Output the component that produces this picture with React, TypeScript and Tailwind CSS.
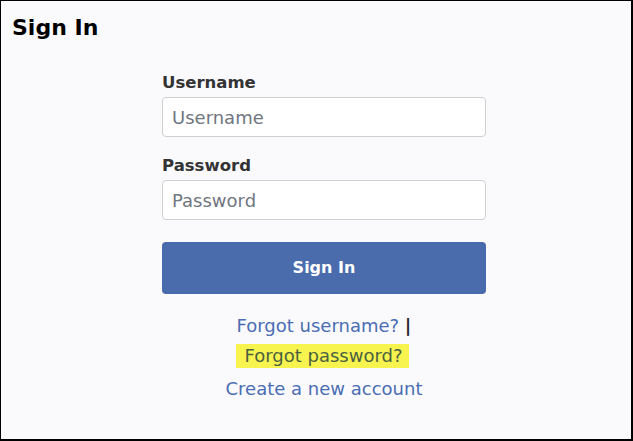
import React from 'react';

const font = { fontFamily: '"DejaVu Sans", sans-serif' };

const Field = ({ label, type }: { label: string; type: string }) => (
  <div>
    <label className="block text-[16.5px] font-bold leading-[20px] text-[#333333] mb-1">{label}</label>
    <input
      type={type}
      placeholder={label}
      className="block w-full h-[40px] rounded-[4px] border border-[#cfcfd2] bg-white pl-[9px] text-[18px] text-[#333] placeholder:text-[#707680] outline-none"
    />
  </div>
);

const App = () => {
  return (
    <div
      style={font}
      className="w-[633px] h-[441px] bg-[#fafafd] border-t border-l border-r-2 border-b-2 border-black box-border"
    >
      <h1 className="pl-[11px] pt-[13px] text-[22px] font-bold leading-[28px] text-black">Sign In</h1>

      <div className="ml-[161px] w-[324px] mt-[31px]">
        <Field label="Username" type="text" />
        <div className="mt-[19px]">
          <Field label="Password" type="password" />
        </div>

        <button className="mt-[22px] w-full h-[52px] rounded-[4px] bg-[#4a6cad] text-white text-[16px] font-bold">
          Sign In
        </button>

        <div className="mt-[20px] flex flex-col items-center text-[18px] leading-[24px] text-[#4a6db3]">
          <div>
            <a href="#">Forgot username?</a> <span className="text-[#2a2a35] font-bold">|</span>
          </div>
          <div className="mt-[6px] -ml-[3px]">
            <a href="#" className="inline-block bg-[#f8f44f] pl-[8px] pr-[6px] text-[#4a6140]">
              Forgot password?
            </a>
          </div>
          <div className="mt-[9px]">
            <a href="#">Create a new account</a>
          </div>
        </div>
      </div>
    </div>
  );
};

export default App;
